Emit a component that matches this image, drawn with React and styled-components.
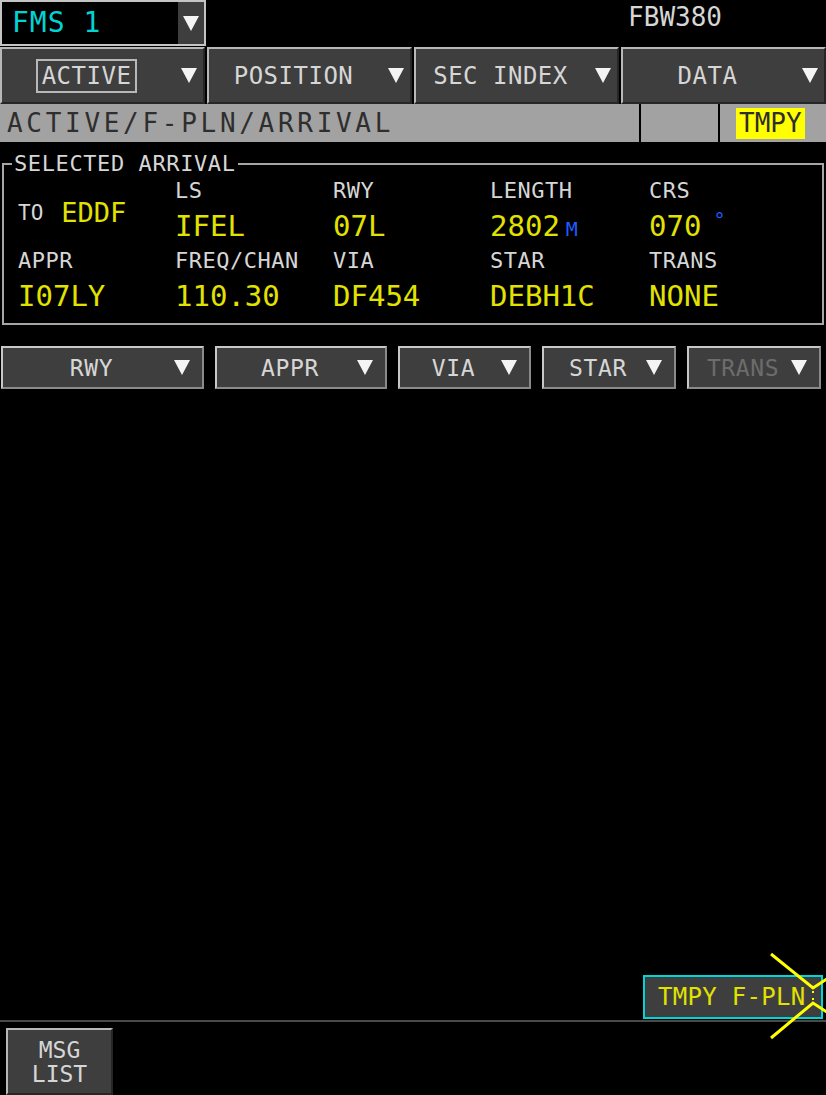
import React from 'react';
import styled, { createGlobalStyle } from 'styled-components';

const GlobalStyle = createGlobalStyle`
    html, body {
        margin: 0;
        padding: 0;
        background: #000;
    }
    body {
        font-family: "DejaVu Sans Mono", "Liberation Mono", monospace;
        color: #dcdcdc;
    }
`;

const colors = {
    panel: '#3e3e3e',
    bevelLight: '#b8b8b8',
    bevelDark: '#262626',
    label: '#d6d6d6',
    value: '#e2e200',
    cyan: '#00d4d4',
    blue: '#1e5cff',
    bar: '#a2a2a2',
};

const Page = styled.div`
    position: relative;
    width: 826px;
    height: 1095px;
    overflow: hidden;
    display: flex;
    flex-direction: column;
    background: #000;
`;

const TopBar = styled.div`
    display: flex;
    height: 47px;
`;

const FmsSelect = styled.div`
    display: flex;
    width: 206px;
    height: 46px;
    box-sizing: border-box;
    border: 2px solid #c4c4c4;
    background: #000;
`;

const FmsName = styled.span`
    flex: 1;
    padding-left: 10px;
    font-size: 28px;
    line-height: 42px;
    letter-spacing: 1px;
    color: ${colors.cyan};
`;

const FmsArrowBox = styled.span`
    display: flex;
    align-items: center;
    justify-content: center;
    width: 26px;
    background: ${colors.panel};
`;

const Arrow = styled.span`
    flex: none;
    width: 0;
    height: 0;
    border-left: 8px solid transparent;
    border-right: 8px solid transparent;
    border-top: 15px solid #f4f4f4;
`;

const AircraftName = styled.span`
    margin-left: auto;
    margin-right: 104px;
    margin-top: 4px;
    font-size: 26px;
    line-height: 26px;
    color: ${colors.label};
`;

const MenuRow = styled.div`
    display: grid;
    grid-template-columns: repeat(4, 205px);
    column-gap: 2px;
    height: 57px;
`;

const MenuButton = styled.div`
    display: flex;
    align-items: center;
    box-sizing: border-box;
    background: ${colors.panel};
    border: 2px solid;
    border-color: ${colors.bevelLight} ${colors.bevelDark} ${colors.bevelDark} ${colors.bevelLight};

    ${Arrow} {
        margin: 0 6px 0 10px;
    }
`;

const MenuLabel = styled.span`
    flex: 1;
    text-align: center;
    font-size: 24px;
    letter-spacing: 0.5px;
    color: ${colors.label};
`;

const ActiveLabel = styled.span`
    padding: 1px 4px;
    border: 2px solid ${colors.bevelLight};
`;

const TitleBar = styled.div`
    display: flex;
    height: 38px;
    background: ${colors.bar};
    color: #2e2e2e;
`;

const Title = styled.span`
    flex: 1;
    padding-left: 7px;
    font-size: 26px;
    line-height: 38px;
    letter-spacing: 3.7px;
`;

const TitleCell = styled.span`
    display: flex;
    align-items: center;
    width: ${({ $width }) => $width}px;
    border-left: 2px solid #000;
    box-sizing: border-box;
    padding-left: 16px;
`;

const TmpyTag = styled.span`
    padding: 0 3px;
    background: #ffff00;
    font-size: 26px;
    line-height: 31px;
    color: #2e2e2e;
`;

const ArrivalBox = styled.fieldset`
    margin: 11px 2px 0;
    padding: 3px 0 11px 14px;
    border: 2px solid #a6a6a6;
    display: grid;
    grid-template-columns: 157px 158px 157px 159px 1fr;
    row-gap: 3px;
`;

const Legend = styled.legend`
    margin-left: -6px;
    padding: 0 2px;
    font-size: 22px;
    line-height: 22px;
    letter-spacing: 0.6px;
    color: ${colors.label};
`;

const Field = styled.div`
    display: flex;
    flex-direction: column;
    gap: 6px;
`;

const FieldLabel = styled.span`
    font-size: 22px;
    line-height: 26px;
    letter-spacing: 0.5px;
    color: ${colors.label};
`;

const FieldValue = styled.span`
    font-size: 29px;
    line-height: 32px;
    color: ${colors.value};
    white-space: nowrap;
`;

const Unit = styled.span`
    position: relative;
    top: ${({ $raised }) => ($raised ? '-9px' : '0')};
    margin-left: ${({ $gap }) => $gap}px;
    font-size: 20px;
    color: ${colors.blue};
`;

const Destination = styled.div`
    display: flex;
    align-items: center;
    padding-top: 2px;
`;

const ToLabel = styled.span`
    font-size: 21px;
    color: ${colors.label};
`;

const ToValue = styled.span`
    margin-left: 18px;
    font-size: 27px;
    color: ${colors.value};
`;

const SelectRow = styled.div`
    display: flex;
    gap: 11px;
    height: 43px;
    margin-top: 21px;
    padding-left: 1px;
`;

const SelectButton = styled.div`
    display: flex;
    align-items: center;
    width: ${({ $width }) => $width}px;
    box-sizing: border-box;
    background: ${colors.panel};
    border: 2px solid;
    border-color: #c8c8c8 #8a8a8a #8a8a8a #c8c8c8;

    ${Arrow} {
        margin-right: 12px;
    }
`;

const SelectLabel = styled.span`
    flex: 1;
    padding-left: 6px;
    text-align: center;
    font-size: 23px;
    letter-spacing: 0.6px;
    color: ${({ $disabled }) => ($disabled ? '#6c6c6c' : colors.label)};
`;

const Spacer = styled.div`
    flex: 1;
`;

const FooterActions = styled.div`
    display: flex;
    justify-content: flex-end;
    padding-right: 3px;
    margin-bottom: 1px;
`;

const TmpyButton = styled.div`
    display: flex;
    align-items: center;
    width: 180px;
    height: 44px;
    box-sizing: border-box;
    padding-left: 13px;
    background: ${colors.panel};
    border: 2px solid ${colors.cyan};
    font-size: 24px;
    letter-spacing: 0.3px;
    color: ${colors.value};
`;

const Divider = styled.div`
    height: 2px;
    background: #4a4a4a;
    margin-bottom: 6px;
`;

const MsgButton = styled.div`
    display: flex;
    flex-direction: column;
    align-items: center;
    justify-content: center;
    width: 107px;
    height: 67px;
    margin-left: 6px;
    box-sizing: border-box;
    background: ${colors.panel};
    border: 2px solid;
    border-color: ${colors.bevelLight} ${colors.bevelDark} ${colors.bevelDark} ${colors.bevelLight};
    font-size: 23px;
    line-height: 24px;
    color: ${colors.label};
`;

const Cursor = styled.svg`
    position: absolute;
    left: 760px;
    top: 943px;
    width: 66px;
    height: 110px;
    overflow: visible;
`;

const menus = [
    { label: 'ACTIVE', boxed: true },
    { label: 'POSITION' },
    { label: 'SEC INDEX' },
    { label: 'DATA' },
];

const fields = [
    { label: 'LS', value: 'IFEL' },
    { label: 'RWY', value: '07L' },
    { label: 'LENGTH', value: '2802', unit: 'M' },
    { label: 'CRS', value: '070', unit: '°', raised: true },
    { label: 'APPR', value: 'I07LY' },
    { label: 'FREQ/CHAN', value: '110.30' },
    { label: 'VIA', value: 'DF454' },
    { label: 'STAR', value: 'DEBH1C' },
    { label: 'TRANS', value: 'NONE' },
];

const selects = [
    { label: 'RWY', width: 203 },
    { label: 'APPR', width: 172 },
    { label: 'VIA', width: 133 },
    { label: 'STAR', width: 134 },
    { label: 'TRANS', width: 134, disabled: true },
];

const App = () => {
    return (
        <Page>
            <GlobalStyle />
            <TopBar>
                <FmsSelect>
                    <FmsName>FMS 1</FmsName>
                    <FmsArrowBox>
                        <Arrow />
                    </FmsArrowBox>
                </FmsSelect>
                <AircraftName>FBW380</AircraftName>
            </TopBar>

            <MenuRow>
                {menus.map(m => (
                    <MenuButton key={m.label}>
                        <MenuLabel>{m.boxed ? <ActiveLabel>{m.label}</ActiveLabel> : m.label}</MenuLabel>
                        <Arrow />
                    </MenuButton>
                ))}
            </MenuRow>

            <TitleBar>
                <Title>ACTIVE/F-PLN/ARRIVAL</Title>
                <TitleCell $width={79} />
                <TitleCell $width={108}>
                    <TmpyTag>TMPY</TmpyTag>
                </TitleCell>
            </TitleBar>

            <ArrivalBox>
                <Legend>SELECTED ARRIVAL</Legend>
                <Destination>
                    <ToLabel>TO</ToLabel>
                    <ToValue>EDDF</ToValue>
                </Destination>
                {fields.map(f => (
                    <Field key={f.label}>
                        <FieldLabel>{f.label}</FieldLabel>
                        <FieldValue>
                            {f.value}
                            {f.unit && (
                                <Unit $gap={f.raised ? 12 : 6} $raised={f.raised}>
                                    {f.unit}
                                </Unit>
                            )}
                        </FieldValue>
                    </Field>
                ))}
            </ArrivalBox>

            <SelectRow>
                {selects.map(s => (
                    <SelectButton key={s.label} $width={s.width}>
                        <SelectLabel $disabled={s.disabled}>{s.label}</SelectLabel>
                        <Arrow />
                    </SelectButton>
                ))}
            </SelectRow>

            <Spacer />

            <FooterActions>
                <TmpyButton>TMPY F-PLN</TmpyButton>
            </FooterActions>
            <Divider />
            <MsgButton>
                <span>MSG</span>
                <span>LIST</span>
            </MsgButton>

            <Cursor viewBox="0 0 66 110">
                <g fill="none" stroke="#ffff00" strokeWidth="3">
                    <polyline points="11,11 53,45 70,34" />
                    <polyline points="11,95 53,60 70,71" />
                </g>
                <rect x="52" y="48" width="2" height="2" fill="#ffff00" />
                <rect x="52" y="55" width="2" height="2" fill="#ffff00" />
            </Cursor>
        </Page>
    );
};

export default App;
